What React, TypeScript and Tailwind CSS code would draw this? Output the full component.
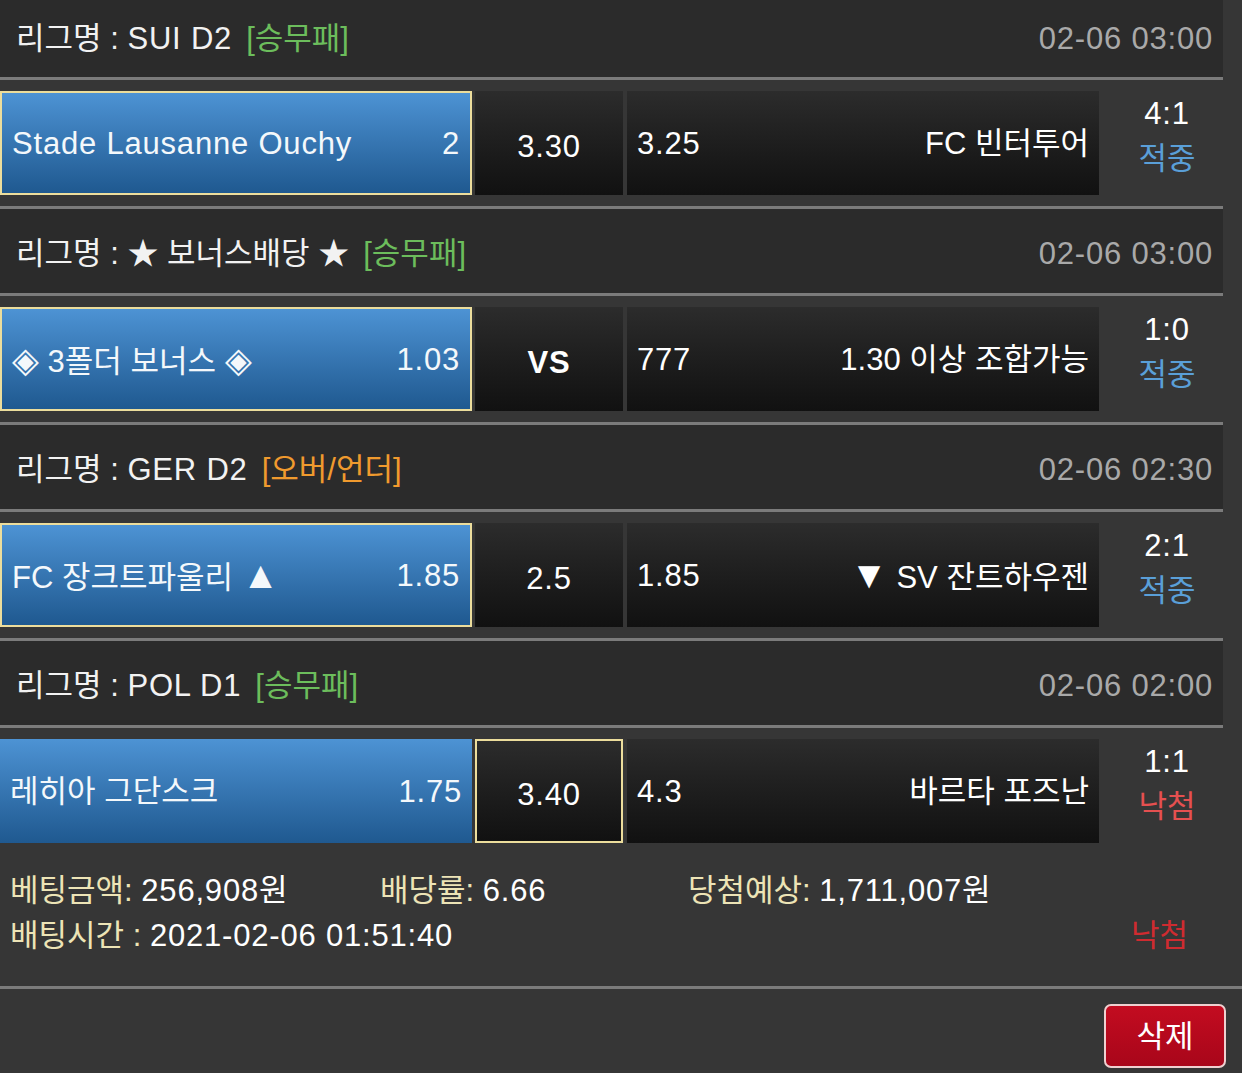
import React from "react";

type Match = {
  league: string;
  kind: string;
  kindColor: string;
  time: string;
  home: string;
  homeOdds: string;
  draw: string;
  drawBold?: boolean;
  awayOdds: string;
  away: string;
  score: string;
  result: "hit" | "miss";
  pick: "home" | "draw";
};

const MATCHES: Match[] = [
  {
    league: "SUI D2",
    kind: "[승무패]",
    kindColor: "text-[#6cbd5c]",
    time: "02-06 03:00",
    home: "Stade Lausanne Ouchy",
    homeOdds: "2",
    draw: "3.30",
    awayOdds: "3.25",
    away: "FC 빈터투어",
    score: "4:1",
    result: "hit",
    pick: "home",
  },
  {
    league: "★ 보너스배당 ★",
    kind: "[승무패]",
    kindColor: "text-[#6cbd5c]",
    time: "02-06 03:00",
    home: "◈ 3폴더 보너스 ◈",
    homeOdds: "1.03",
    draw: "VS",
    drawBold: true,
    awayOdds: "777",
    away: "1.30 이상 조합가능",
    score: "1:0",
    result: "hit",
    pick: "home",
  },
  {
    league: "GER D2",
    kind: "[오버/언더]",
    kindColor: "text-[#f09a2e]",
    time: "02-06 02:30",
    home: "FC 장크트파울리 ▲",
    homeOdds: "1.85",
    draw: "2.5",
    awayOdds: "1.85",
    away: "▼ SV 잔트하우젠",
    score: "2:1",
    result: "hit",
    pick: "home",
  },
  {
    league: "POL D1",
    kind: "[승무패]",
    kindColor: "text-[#6cbd5c]",
    time: "02-06 02:00",
    home: "레히아 그단스크",
    homeOdds: "1.75",
    draw: "3.40",
    awayOdds: "4.3",
    away: "바르타 포즈난",
    score: "1:1",
    result: "miss",
    pick: "draw",
  },
];

// latin text in the screenshot runs a bit wider than Liberation Sans
const latin = (s: string) => (/^[\x00-\x7F]*$/.test(s) ? "tracking-[0.8px]" : "");

// arrows / diamonds are drawn bigger than the text around them
function TeamName({ name }: { name: string }) {
  const parts = name.split(/([▲▼◈])/);
  return (
    <span className={`whitespace-pre ${latin(name)}`}>
      {parts.map((p, i) =>
        p === "▲" || p === "▼" ? (
          <span key={i} className="text-[38px]">
            {p}
          </span>
        ) : p === "◈" ? (
          <span key={i} className="text-[35px]">
            {p}
          </span>
        ) : (
          <React.Fragment key={i}>{p}</React.Fragment>
        ),
      )}
    </span>
  );
}

function Divider() {
  return <div className="h-[3px] w-[1223px] bg-[#7b7b7b]" />;
}

function LeagueHeader({ m, first }: { m: Match; first: boolean }) {
  return (
    <div
      className={`flex w-[1223px] items-center justify-between bg-[#2b2b2b] pl-[16px] pr-[10px] ${
        first ? "h-[77px]" : "h-[84px] pt-[4px]"
      }`}
    >
      <div className="flex items-center whitespace-pre text-[#f2f2f2]">
        <span>리그명 : </span>
        <span className={latin(m.league)}>{m.league}</span>
        <span className={`ml-[14px] ${m.kindColor}`}>{m.kind}</span>
      </div>
      <span className="tracking-[0.8px] text-[#a9a9a9]">{m.time}</span>
    </div>
  );
}

function MatchRow({ m }: { m: Match }) {
  const homePicked = m.pick === "home";
  const drawPicked = m.pick === "draw";
  return (
    <div className="flex h-[126px] w-[1223px] items-center">
      <div className="flex h-[104px] items-stretch gap-[3px]">
        <div
          className={`flex w-[472px] items-center justify-between bg-gradient-to-b from-[#4d93d4] to-[#1f5990] pl-[10px] pr-[10px] text-[#f4f8fb] ${
            homePicked ? "border-2 border-[#ecdd9c]" : ""
          }`}
        >
          <TeamName name={m.home} />
          <span className="tracking-[0.8px]">{m.homeOdds}</span>
        </div>
        <div
          className={`flex w-[148px] items-center justify-center bg-gradient-to-b from-[#2c2c2c] to-[#111111] text-white ${
            drawPicked ? "border-2 border-[#ecdd9c]" : ""
          } ${m.drawBold ? "font-bold" : ""}`}
        >
          <span className="mt-[6px] tracking-[0.8px]">{m.draw}</span>
        </div>
        <div className="ml-[1px] flex w-[472px] items-center justify-between bg-gradient-to-b from-[#2c2c2c] to-[#111111] pl-[10px] pr-[10px] text-white">
          <span className="tracking-[0.8px]">{m.awayOdds}</span>
          <TeamName name={m.away} />
        </div>
      </div>
      <div className="flex flex-1 flex-col items-center pb-[14px] pl-[12px] leading-[45px]">
        <span className="tracking-[0.8px] text-white">{m.score}</span>
        <span className={m.result === "hit" ? "text-[#5a9fd8]" : "text-[#e55050]"}>
          {m.result === "hit" ? "적중" : "낙첨"}
        </span>
      </div>
    </div>
  );
}

export default function App() {
  return (
    <div className="h-[1073px] w-[1242px] overflow-hidden bg-[#363636] font-['Liberation_Sans','Noto_Sans_CJK_KR',sans-serif] text-[31px] leading-none">
      {MATCHES.map((m, i) => (
        <div key={i}>
          <LeagueHeader m={m} first={i === 0} />
          <Divider />
          <MatchRow m={m} />
          {i < MATCHES.length - 1 ? <Divider /> : null}
        </div>
      ))}
      <div className="flex h-[132px] w-[1223px] flex-col pl-[10px] pt-[18px]">
        <div className="flex h-[36px] items-center">
          <span className="w-[370px]">
            <span className="text-[#ede4b6]">베팅금액: </span>
            <span className="tracking-[0.8px] text-white">256,908원</span>
          </span>
          <span className="w-[308px]">
            <span className="text-[#ede4b6]">배당률: </span>
            <span className="tracking-[0.8px] text-white">6.66</span>
          </span>
          <span>
            <span className="text-[#ede4b6]">당첨예상: </span>
            <span className="tracking-[0.8px] text-white">1,711,007원</span>
          </span>
        </div>
        <div className="mt-[9px] flex h-[36px] items-center justify-between pr-[35px]">
          <span>
            <span className="text-[#ede4b6]">배팅시간 : </span>
            <span className="tracking-[0.8px] text-white">2021-02-06 01:51:40</span>
          </span>
          <span className="text-[#cf2b30]">낙첨</span>
        </div>
      </div>
      <div className="h-[3px] w-full bg-[#7b7b7b]" />
      <div className="flex justify-end pr-[16px] pt-[15px]">
        <button className="flex h-[64px] w-[122px] items-center justify-center rounded-[7px] border-2 border-[#efd0d0] bg-gradient-to-b from-[#c30c20] to-[#a8061a] text-white">
          삭제
        </button>
      </div>
    </div>
  );
}
